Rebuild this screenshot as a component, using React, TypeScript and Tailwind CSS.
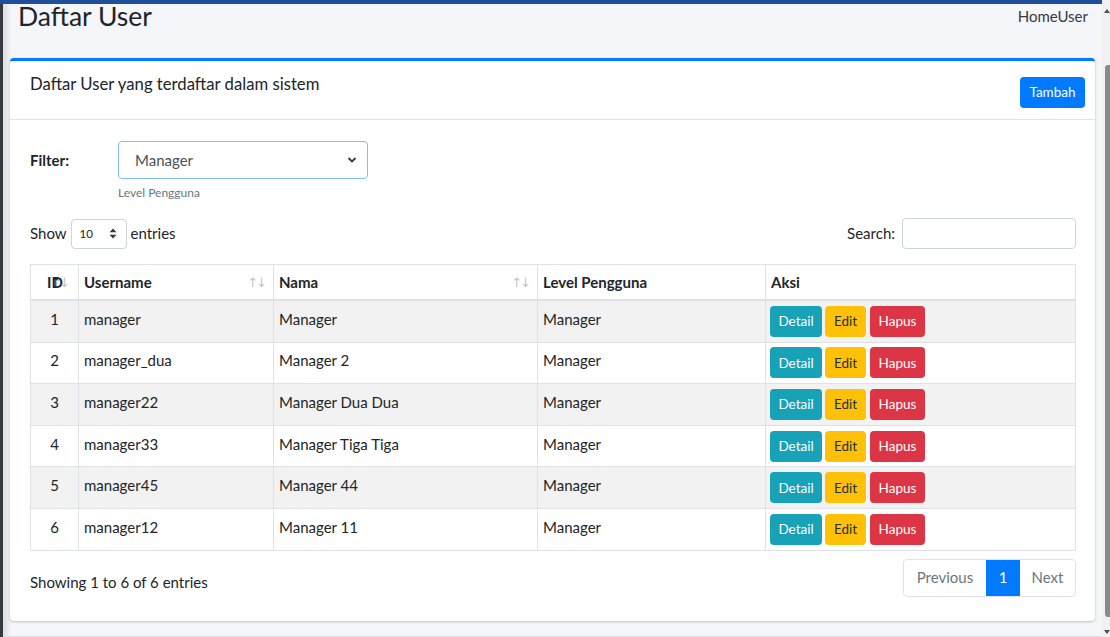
import React from "react";

const users = [
  { id: 1, username: "manager", nama: "Manager" },
  { id: 2, username: "manager_dua", nama: "Manager 2" },
  { id: 3, username: "manager22", nama: "Manager Dua Dua" },
  { id: 4, username: "manager33", nama: "Manager Tiga Tiga" },
  { id: 5, username: "manager45", nama: "Manager 44" },
  { id: 6, username: "manager12", nama: "Manager 11" },
];

const SortIcon = ({ active = false }: { active?: boolean }) =>
  active ? (
    <span className="absolute right-[8px] top-[8px] text-[13px] leading-[20px] font-normal [font-family:'DejaVu_Sans',sans-serif]">
      <span className="text-[#212529]">↑</span>
      <span className="-ml-[2px] text-[#c4c4c4]">↓</span>
    </span>
  ) : (
    <span className="absolute right-[8px] top-[8px] text-[13px] leading-[20px] font-normal tracking-[-2px] text-[#c4c4c4] [font-family:'DejaVu_Sans',sans-serif]">
      ↑↓
    </span>
  );

export default function App() {
  return (
    <div className="relative flex h-[637px] w-[1110px] overflow-hidden bg-[#f4f6f9] text-[15px] text-[#212529] [font-family:Lato,'Noto_Sans',sans-serif]">
      <div className="absolute left-0 right-0 top-0 h-[4px] bg-[#1f4f98]" />
      <div className="w-[3px] shrink-0 bg-[#343a40] shadow-[2px_0_6px_rgba(0,0,0,0.25)]" />

      <main className="flex flex-1 flex-col">
        <div className="flex h-[58px] items-start justify-between pl-[15px] pr-[14px]">
          <h1 className="pt-[1px] text-[26.5px] leading-[1.2] font-normal text-[#212529]">Daftar User</h1>
          <div className="pt-[4px] text-[15px] leading-[24px] text-[#343a40]">HomeUser</div>
        </div>

        <div className="ml-[7px] mr-[7px] rounded-[4px] border-t-[3px] border-[#007bff] bg-white shadow-[0_0_1px_rgba(0,0,0,0.125),0_1px_3px_rgba(0,0,0,0.2)]">
          <div className="flex h-[59px] items-start justify-between border-b border-[#dfe2e6] pl-[20px] pr-[10px]">
            <h3 className="pt-[10px] text-[16.7px] leading-[26px] font-normal">
              Daftar User yang terdaftar dalam sistem
            </h3>
            <button className="mt-[16px] h-[31px] w-[65px] rounded-[4px] bg-[#007bff] text-[13.5px] text-white">
              Tambah
            </button>
          </div>

          <div className="pl-[20px] pr-[19px] pt-[21px] pb-[24px]">
            <div className="flex h-[38px] items-center">
              <label className="w-[88px] font-bold">Filter:</label>
              <div className="flex h-[38px] w-[250px] items-center justify-between rounded-[4px] border border-[#80bdff] pl-[16px] pr-[10px] text-[#495057]">
                <span>Manager</span>
                <svg width="10" height="8" viewBox="0 0 10 8" fill="none">
                  <path d="M1.5 2l3.5 3.5L8.5 2" stroke="#343a40" strokeWidth="1.8" />
                </svg>
              </div>
            </div>
            <div className="ml-[88px] mt-[4px] text-[12px] leading-[19px] text-[#6c757d]">Level Pengguna</div>

            <div className="mt-[16px] flex h-[31px] items-center justify-between">
              <div className="flex items-center gap-[4px]">
                <span>Show</span>
                <div className="flex h-[30px] w-[56px] items-center justify-between rounded-[4px] border border-[#ced4da] pl-[8px] pr-[9px]">
                  <span className="text-[11.5px]">10</span>
                  <svg width="8" height="11" viewBox="0 0 8 11">
                    <path d="M4 0.5L7.5 4.2H0.5z M4 10.5L0.5 6.8H7.5z" fill="#343a40" />
                  </svg>
                </div>
                <span>entries</span>
              </div>
              <div className="flex items-center gap-[7px]">
                <span>Search:</span>
                <div className="h-[31px] w-[174px] rounded-[4px] border border-[#ced4da]" />
              </div>
            </div>

            <table className="mt-[15px] w-full table-fixed border-collapse">
              <colgroup>
                <col className="w-[48px]" />
                <col className="w-[195px]" />
                <col className="w-[264px]" />
                <col className="w-[228px]" />
                <col />
              </colgroup>
              <thead>
                <tr className="text-left">
                  <th className="relative border border-b-2 border-[#dee2e6] px-[16px] py-[5px] leading-[24px]">
                    ID
                    <SortIcon active />
                  </th>
                  <th className="relative border border-b-2 border-[#dee2e6] px-[5px] py-[5px] leading-[24px]">
                    Username
                    <SortIcon />
                  </th>
                  <th className="relative border border-b-2 border-[#dee2e6] px-[5px] py-[5px] leading-[24px]">
                    Nama
                    <SortIcon />
                  </th>
                  <th className="border border-b-2 border-[#dee2e6] px-[5px] py-[5px] leading-[24px]">
                    Level Pengguna
                  </th>
                  <th className="border border-b-2 border-[#dee2e6] px-[5px] py-[5px] leading-[24px]">Aksi</th>
                </tr>
              </thead>
              <tbody>
                {users.map((u, i) => (
                  <tr key={u.id} className={i % 2 === 0 ? "bg-[#f2f2f2]" : "bg-white"}>
                    <td className="border border-[#dee2e6] px-[5px] py-[4.8px] text-center align-top leading-[26px]">
                      {u.id}
                    </td>
                    <td className="border border-[#dee2e6] px-[5px] py-[4.8px] align-top leading-[26px]">{u.username}</td>
                    <td className="border border-[#dee2e6] px-[5px] py-[4.8px] align-top leading-[26px]">{u.nama}</td>
                    <td className="border border-[#dee2e6] px-[5px] py-[4.8px] align-top leading-[26px]">Manager</td>
                    <td className="border border-[#dee2e6] px-[4px] py-[4.8px] align-top">
                      <div className="flex gap-[3px] text-[13.5px]">
                        <button className="h-[31px] w-[52px] rounded-[4px] bg-[#17a2b8] text-white">Detail</button>
                        <button className="h-[31px] w-[41px] rounded-[4px] bg-[#ffc107] text-[#1f2d3d]">Edit</button>
                        <button className="ml-[1px] h-[31px] w-[55px] rounded-[4px] bg-[#dc3545] text-white">Hapus</button>
                      </div>
                    </td>
                  </tr>
                ))}
              </tbody>
            </table>

            <div className="mt-[8px] flex items-start justify-between">
              <div className="pt-[11px] leading-[24px]">Showing 1 to 6 of 6 entries</div>
              <div className="flex h-[38px] overflow-hidden rounded-[4px] border border-[#dee2e6]">
                <span className="flex w-[82px] items-center justify-center text-[#6c757d]">Previous</span>
                <span className="flex w-[34px] items-center justify-center bg-[#007bff] text-white">1</span>
                <span className="flex w-[55px] items-center justify-center text-[#6c757d]">Next</span>
              </div>
            </div>
          </div>
        </div>

        <div className="mt-[15px] flex-1 border-t border-[#dee2e6] bg-white" />
      </main>

      <div className="relative w-[8px] shrink-0 bg-[#f1f1f1]">
        <div className="absolute left-[2px] top-[9px] h-0 w-0 border-x-[3px] border-b-[4px] border-x-transparent border-b-[#505050]" />
        <div className="absolute left-[3px] right-0 top-[65px] h-[552px] rounded-l-[3px] bg-[#8a8a8a]" />
        <div className="absolute bottom-[3px] left-[2px] h-0 w-0 border-x-[3px] border-t-[4px] border-x-transparent border-t-[#505050]" />
      </div>
    </div>
  );
}
